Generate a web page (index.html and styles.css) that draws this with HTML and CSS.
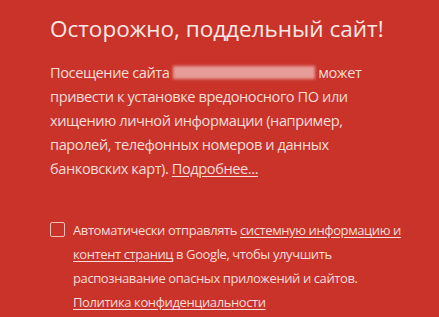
FILE: index.html
```html
<!DOCTYPE html>
<html lang="ru">
<head>
<meta charset="utf-8">
<link rel="stylesheet" href="styles.css">
</head>
<body>
<main class="page">
  <h1 class="title">Осторожно, поддельный сайт!</h1>
  <p class="body">Посещение сайта <span class="blur"></span> может<br>привести к установке вредоносного ПО или<br>хищению личной информации (например,<br>паролей, телефонных номеров и данных<br>банковских карт). <a class="link" href="#">Подробнее...</a></p>
  <label class="optin">
    <span class="box"></span>
    <span class="optin-text">Автоматически отправлять <a class="link" href="#">системную информацию и<br>контент страниц</a> в Google, чтобы улучшить<br>распознавание опасных приложений и сайтов.<br><a class="link" href="#">Политика конфиденциальности</a></span>
  </label>
</main>
</body>
</html>
```
FILE: styles.css
```css
html, body {
  margin: 0;
  height: 100%;
  background: #c9332a;
  overflow: hidden;
}
.page {
  padding: 14px 0 0 50px;
  font-family: "Open Sans", "Noto Sans", sans-serif;
  color: #f6dcd8;
  white-space: nowrap;
}
.title {
  margin: 0;
  font-size: 22.5px;
  font-weight: 400;
  line-height: 30px;
  color: #fbe9e6;
}
.body {
  margin: 16px 0 0;
  font-size: 14.6px;
  letter-spacing: -0.42px;
  line-height: 24px;
}
.blur {
  display: inline-block;
  width: 142px;
  height: 13px;
  vertical-align: -1px;
  background: #e69d99;
  filter: blur(1.5px);
}
.link {
  color: inherit;
  text-decoration: underline;
  text-underline-offset: 2px;
}
.optin {
  display: flex;
  gap: 8px;
  margin-top: 38px;
  font-size: 13px;
  letter-spacing: -0.4px;
  line-height: 24px;
}
.box {
  flex: none;
  box-sizing: border-box;
  width: 15px;
  height: 15px;
  margin-top: 4px;
  border: 1px solid #efc0bb;
  border-radius: 2px;
}
```
